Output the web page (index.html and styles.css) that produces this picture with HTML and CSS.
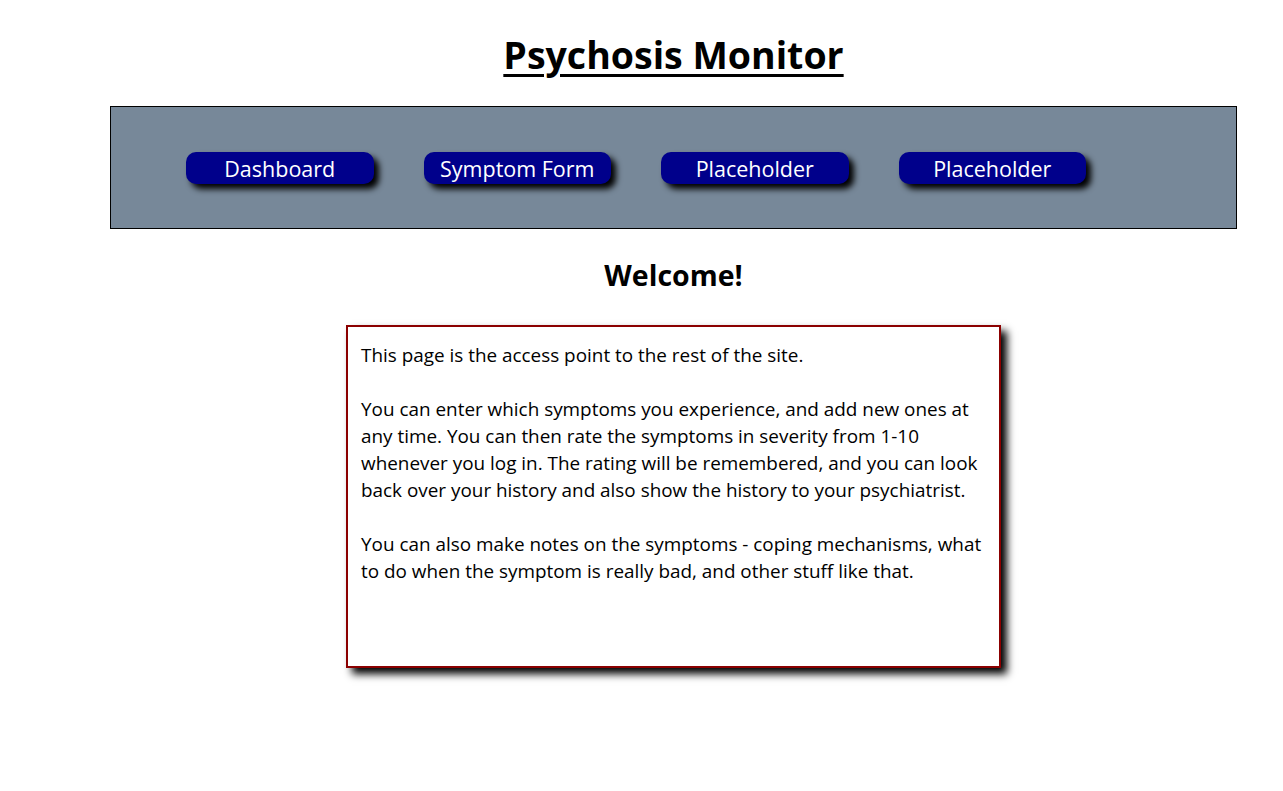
FILE: index.html
```html
<!DOCTYPE html>
<html lang="en">
<head>
<meta charset="utf-8">
<title>Psychosis Monitor</title>
<link rel="stylesheet" href="styles.css">
</head>
<body>
<div class="page">
  <h1 class="title">Psychosis Monitor</h1>
  <nav class="nav">
    <a class="nav-btn" href="#">Dashboard</a>
    <a class="nav-btn" href="#">Symptom Form</a>
    <a class="nav-btn" href="#">Placeholder</a>
    <a class="nav-btn" href="#">Placeholder</a>
  </nav>
  <h2 class="welcome">Welcome!</h2>
  <div class="info">
    <p>This page is the access point to the rest of the site.</p>
    <p>You can enter which symptoms you experience, and add new ones at any time. You can then rate the symptoms in severity from 1-10 whenever you log in. The rating will be remembered, and you can look back over your history and also show the history to your psychiatrist.</p>
    <p>You can also make notes on the symptoms - coping mechanisms, what to do when the symptom is really bad, and other stuff like that.</p>
  </div>
</div>
</body>
</html>
```
FILE: styles.css
```css
html {
  background: #ffffff;
}

body {
  margin: 0;
  padding: 0 0 60px;
  font-family: "Open Sans", "Noto Sans", sans-serif;
  color: #000;
}

.page {
  margin-left: 64px;
  display: flex;
  flex-direction: column;
  align-items: center;
}

.title {
  margin: 29px 0 0;
  font-size: 37.5px;
  font-weight: bold;
  line-height: 51px;
  text-decoration: underline;
  text-decoration-thickness: 3px;
  text-underline-offset: 5px;
}

.nav {
  box-sizing: border-box;
  width: 1127px;
  height: 123px;
  margin-top: 26px;
  background: #778899;
  border: 1px solid #000;
  display: flex;
  align-items: center;
  gap: 50px;
  padding-left: 75px;
}

.nav-btn {
  box-sizing: border-box;
  width: 187.5px;
  height: 32px;
  padding-top: 1px;
  background: #00008b;
  color: #fff;
  text-decoration: none;
  font-size: 21.5px;
  line-height: 31px;
  text-align: center;
  border-radius: 10px;
  box-shadow: 5px 5px 6px #000;
}

.welcome {
  margin: 27px 0 0;
  font-size: 28.5px;
  font-weight: bold;
  line-height: 39px;
}

.info {
  box-sizing: border-box;
  width: 655px;
  height: 343px;
  margin-top: 30px;
  border: 2px solid #8b0000;
  padding: 15px 13px 13px;
  background: #fff;
  box-shadow: 6px 6px 8px #000;
  font-size: 18.9px;
  line-height: 27px;
}

.info p {
  margin: 0 0 27px;
}
```
